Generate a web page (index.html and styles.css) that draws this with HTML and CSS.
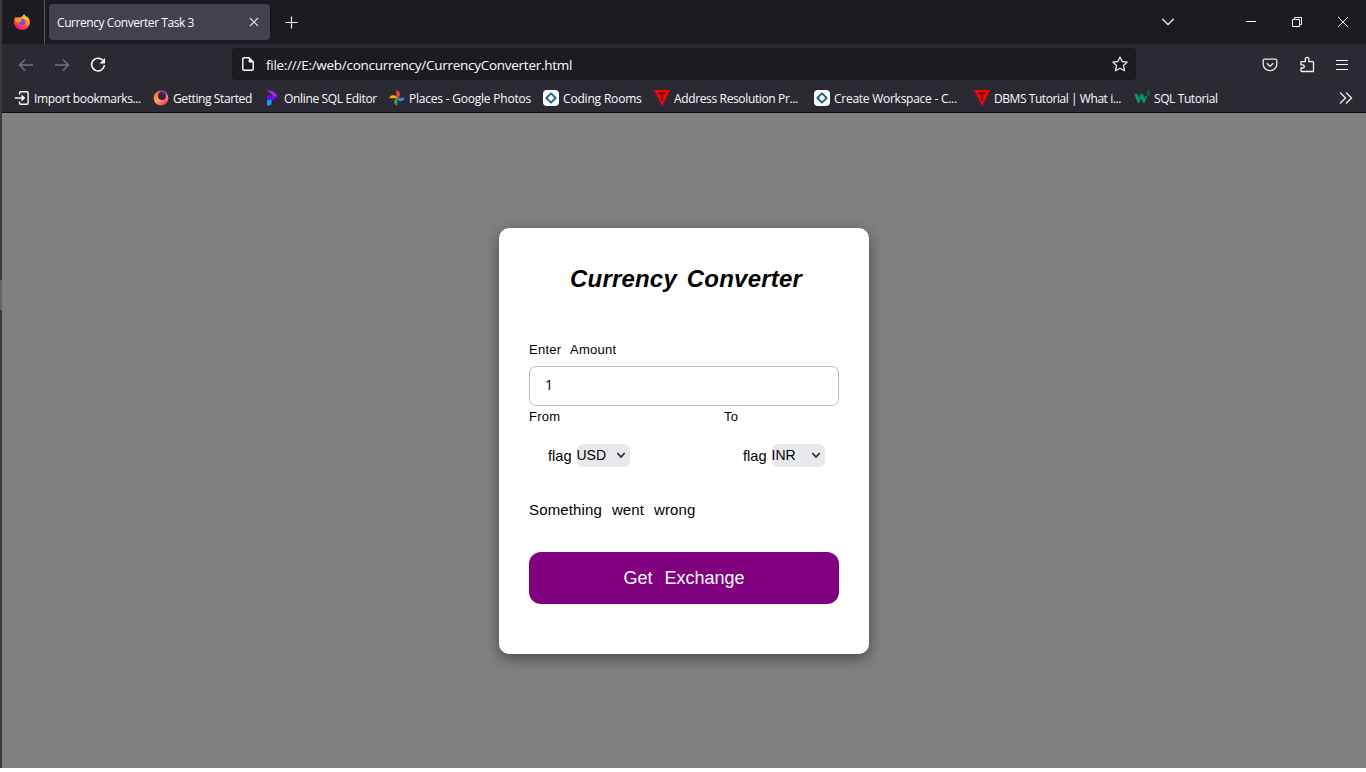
FILE: index.html
```html
<!DOCTYPE html>
<html lang="en">
<head>
<meta charset="utf-8">
<title>Currency Converter Task 3</title>
<link rel="stylesheet" href="styles.css">
</head>
<body>
<svg class="defs" width="0" height="0" aria-hidden="true">
  <defs>
    <linearGradient id="flame" x1="0.8" y1="0" x2="0.3" y2="1"><stop offset="0" stop-color="#fff14a"/><stop offset=".4" stop-color="#ff9526"/><stop offset=".75" stop-color="#ff3750"/><stop offset="1" stop-color="#f0148c"/></linearGradient>
    <linearGradient id="swirl" x1="0.1" y1="0.2" x2="0.6" y2="1"><stop offset="0" stop-color="#ff6a3a"/><stop offset=".5" stop-color="#ffa84a"/><stop offset="1" stop-color="#ff3a68"/></linearGradient>
    <symbol id="rooms" viewBox="0 0 16 16"><rect width="16" height="16" rx="4" fill="#fff"/><path d="M8 3.300 12.700 8 8 12.700 3.300 8Z" fill="none" stroke="#1d5f8c" stroke-width="1.800" stroke-linejoin="round"/></symbol>
    <symbol id="tri" viewBox="0 0 16 16"><path d="M0 0h16L8.200 16Z" fill="#f00"/><path d="M4.700 3.300h6.600M8 3.300v7.600" stroke="#4a1020" stroke-width="1.800"/></symbol>
  </defs>
</svg>
<div class="window">
  <div class="edge"><i></i></div>
  <div class="browser">
    <div class="tabbar">
      <div class="pinned"><svg width="16" height="16" viewBox="0 0 16 16"><path d="M8.200 2.400C9 1.800 9.600 1 10 0c1 1 1.200 2 2.200 3l.6-.8C15 4.300 16 6 15.900 8.500 15.700 12.800 12.300 16 8 16S.2 12.600.1 8.300C0 6 .6 4 1.900 2.500L2.400 4 3.700 2.900 5 3.800Z" fill="url(#flame)"/><path d="M5.400 5.300 8 4.700c2.300 0 3.700 1.500 3.600 3.300-.1 1.900-1.600 3.100-3.400 3.100-1.900 0-3.200-1.300-3.300-2.900l2.400-.7-.3-1Z" fill="#7a48e8"/><path d="M1.500 5.500 5.500 4.600l2.600 1.300-1.700 1.500-1.800.8L2 8Z" fill="#ff9a1f"/></svg></div>
      <div class="tab"><span class="tab-title">Currency Converter Task 3</span><svg width="10" height="10" viewBox="0 0 10 10"><path d="M1 1l8 8M9 1 1 9" stroke="#e2e1e8" stroke-width="1.100"/></svg></div>
      <svg class="newtab" width="13" height="13" viewBox="0 0 13 13"><path d="M6.500.5v12M.5 6.500h12" stroke="#fbfbfe" stroke-width="1.200"/></svg>
      <div class="win-controls">
        <svg width="14" height="10" viewBox="0 0 14 10"><path d="M1.300 2 7 7.600 12.700 2" fill="none" stroke="#e8e8ec" stroke-width="1.400"/></svg>
        <svg width="10" height="10" viewBox="0 0 10 10"><path d="M0 4.500h10" stroke="#fff"/></svg>
        <svg width="10" height="10" viewBox="0 0 10 10"><path d="M.5 2.500h7v7h-7zM2.500 2.500v-2h7v7h-2" fill="none" stroke="#fff"/></svg>
        <svg width="12" height="12" viewBox="0 0 12 12"><path d="M1 1l10 10M11 1 1 11" stroke="#e8e8ec" stroke-width="1"/></svg>
      </div>
    </div>
    <div class="navbar">
      <div class="nav-buttons">
        <svg width="16" height="16" viewBox="0 0 16 16"><path d="M15 8H1.500M7 2.500 1.500 8 7 13.500" fill="none" stroke="#77757e" stroke-width="1.300"/></svg>
        <svg width="16" height="16" viewBox="0 0 16 16"><path d="M1 8h13.500M9 2.500 14.500 8 9 13.500" fill="none" stroke="#77757e" stroke-width="1.300"/></svg>
        <svg width="16" height="16" viewBox="0 0 16 16"><path d="M12.800 3.300A6.400 6.400 0 1 0 14.400 8" fill="none" stroke="#fbfbfe" stroke-width="1.500"/><path d="M15 1v5.400H9.600Z" fill="#fbfbfe"/></svg>
      </div>
      <div class="urlbar">
        <svg width="16" height="16" viewBox="0 0 16 16"><path d="M2.800 2.700q0-1 1-1H9l4.200 4.200v7.400q0 1-1 1H3.800q-1 0-1-1Z" fill="none" stroke="#fbfbfe" stroke-width="1.400"/><path d="M8.600 1.600v4.800h4.800Z" fill="#fbfbfe"/></svg>
        <span class="url">file:///E:/web/concurrency/CurrencyConverter.html</span>
        <svg width="16" height="16" viewBox="0 0 16 16"><path d="M8 1 10.100 5.500 15.200 6.100 11.500 9.500 12.500 14.700 8 12.200 3.500 14.700 4.500 9.500.8 6.100 5.900 5.500Z" fill="none" stroke="#e6e6ea" stroke-width="1.300" stroke-linejoin="round"/></svg>
      </div>
      <div class="nav-tools">
        <svg width="16" height="16" viewBox="0 0 16 16"><path d="M2.500 2.200h11q1.300 0 1.300 1.300v3.800a6.800 6.400 0 0 1-13.600 0V3.500q0-1.300 1.300-1.300Z" fill="none" stroke="#e8e8ec" stroke-width="1.300"/><path d="M4.800 6.300 8 9.300 11.200 6.300" fill="none" stroke="#e8e8ec" stroke-width="1.400"/></svg>
        <svg width="16" height="17" viewBox="0 0 16 17"><path d="M2 5.700h4.300V3.200a1.800 1.800 0 0 1 3.600 0v2.500h3.800q.8 0 .8.800v9H2.900q-.9 0-.9-.9v-2.600h1.700a1.600 1.600 0 0 0 0-3.200H2Z" fill="none" stroke="#f4f4f8" stroke-width="1.300" stroke-linejoin="round"/></svg>
        <svg width="14" height="12" viewBox="0 0 14 12"><path d="M1 1.500h12M1 5.500h12M1 10.500h12" stroke="#f4f4f8" stroke-width="1.200"/></svg>
      </div>
    </div>
    <div class="bookmarks">
      <div class="bm b1"><svg width="16" height="16" viewBox="0 0 16 16"><path d="M5.500 4.500V3q0-1.300 1.300-1.300h6q1.300 0 1.300 1.300v10q0 1.300-1.300 1.300h-6q-1.300 0-1.300-1.300v-1.500" fill="none" stroke="#fbfbfe" stroke-width="1.400"/><path d="M.8 8H9" stroke="#fbfbfe" stroke-width="1.400"/><path d="M7.500 4.600 11.300 8 7.500 11.400Z" fill="#fbfbfe"/></svg><span>Import bookmarks...</span></div>
      <div class="bm b2"><svg width="16" height="16" viewBox="0 0 16 16"><circle cx="8" cy="8" r="7.400" fill="url(#swirl)"/><path d="M7 .8a7.400 7.400 0 0 1 8.400 7.600C15 5.500 12 2 7 .8Z" fill="#7440c8"/><circle cx="9" cy="5.900" r="4" fill="#30244a"/><path d="M6 .9Q12 1 12.900 6l-3-2.500Z" fill="#4d318c"/></svg><span>Getting Started</span></div>
      <div class="bm b3"><svg width="16" height="16" viewBox="0 0 16 16"><path d="M2.500 0 8.500 1 12.800 4.500 13 7 8.500 8 8.500 5.200 6.500 3.300Z" fill="#a02af8"/><path d="M12.900 5.500 11.500 8.500 8 10.500 3 11.500V8.500L8.500 6.500Z" fill="#6a11f2"/><path d="M3 6 7 5 6.500 8 3 9.500Z" fill="#6a11f2"/><path d="M3 10.500 7.500 9.800V14.500L3 16Z" fill="#0aa0ff"/></svg><span>Online SQL Editor</span></div>
      <div class="bm b4"><svg width="16" height="16" viewBox="0 0 16 16"><path d="M7.700.5a4 4 0 0 1 0 7.700Z" fill="#ea4335" stroke="#ea4335" stroke-width=".7"/><path d="M15.400 8.200A3.900 3.900 0 0 1 8 8.200Z" fill="#4285f4" stroke="#4285f4" stroke-width=".7"/><path d="M8 15.500A3.900 3.900 0 0 1 8 8.300Z" fill="#34a853" stroke="#34a853" stroke-width=".7"/><path d="M.6 7.800A3.900 3.900 0 0 1 7.700 7.800Z" fill="#fbbc04" stroke="#fbbc04" stroke-width=".7"/></svg><span>Places - Google Photos</span></div>
      <div class="bm b5"><svg width="16" height="16"><use href="#rooms"/></svg><span>Coding Rooms</span></div>
      <div class="bm b6"><svg width="16" height="16"><use href="#tri"/></svg><span>Address Resolution Pr...</span></div>
      <div class="bm b7"><svg width="16" height="16"><use href="#rooms"/></svg><span>Create Workspace - C...</span></div>
      <div class="bm b8"><svg width="16" height="16"><use href="#tri"/></svg><span>DBMS Tutorial | What i...</span></div>
      <div class="bm b9"><svg width="16" height="16" viewBox="0 0 16 16"><path d="M.3 4H3.500L5.300 8.500 6.500 4H9L10.300 8.500 11.500 6H13.300L10.500 13H9.300L7.200 8.500 5 13H3.800Z" fill="#059862"/><path d="M13 1.800h2.300l-1.200 1.400q1.400.1 1.200 1.200-.5 1-2.300.4" fill="none" stroke="#059862" stroke-width=".8"/></svg><span>SQL Tutorial</span></div>
      <svg class="more" width="14" height="14" viewBox="0 0 14 14"><path d="M1 1.500 6.500 7 1 12.500M7 1.500 12.500 7 7 12.500" fill="none" stroke="#e8e8ec" stroke-width="1.400"/></svg>
    </div>
    <main class="page">
      <div class="card">
        <h1>Currency Converter</h1>
        <div class="label amount-label">Enter Amount</div>
        <div class="amount">1</div>
        <div class="pair labels"><div class="label">From</div><div class="label">To</div></div>
        <div class="pair picks">
          <div class="pick"><span>flag</span><div class="select"><span>USD</span><svg width="10" height="7" viewBox="0 0 10 7"><path d="M1.300 1 5 5 8.700 1" fill="none" stroke="#2b2a33" stroke-width="1.800"/></svg></div></div>
          <div class="pick"><span>flag</span><div class="select"><span>INR</span><svg width="10" height="7" viewBox="0 0 10 7"><path d="M1.300 1 5 5 8.700 1" fill="none" stroke="#2b2a33" stroke-width="1.800"/></svg></div></div>
        </div>
        <p class="msg">Something went wrong</p>
        <button class="go">Get Exchange</button>
      </div>
    </main>
  </div>
</div>
</body>
</html>
```

FILE: styles.css
```css
* { box-sizing: border-box; }
body { margin: 0; background: #fff; font-family: "Liberation Sans", Arial, sans-serif; overflow: hidden; }
.defs { position: absolute; }
svg { display: block; flex: none; }
.window { display: flex; width: 1366px; height: 768px; }
.edge { width: 2px; background: #3a3a3a; padding-top: 280px; }
.edge i { display: block; height: 30px; background: #666; }
.browser { flex: 1; display: flex; flex-direction: column; }
.tabbar, .navbar, .bookmarks { font-family: "Open Sans", "Noto Sans", sans-serif; color: #fbfbfe; white-space: nowrap; }

.tabbar { display: flex; align-items: center; height: 44px; background: #1c1b22; }
.pinned { width: 43px; height: 44px; padding: 14px 0 0 12px; border-right: 1px solid #5a5960; }
.tab { display: flex; align-items: center; justify-content: space-between; width: 221px; height: 36px; margin-left: 4px; padding: 0 11px 0 8px; border-radius: 4px; background: #42414d; box-shadow: 0 0 3px rgba(0,0,0,.5); font-size: 12px; }
.tab-title { padding-top: 1px; letter-spacing: -.43px; }
.newtab { margin-left: 15px; }
.win-controls { display: flex; align-items: center; margin-left: auto; padding-right: 17px; }
.win-controls svg:nth-child(1) { margin-right: 71px; }
.win-controls svg:nth-child(2) { margin-right: 36px; }
.win-controls svg:nth-child(3) { margin-right: 35px; }

.navbar { display: flex; align-items: center; height: 40px; padding-top: 1px; background: #2b2a33; }
.nav-buttons { display: flex; gap: 20px; width: 230px; padding-left: 16px; }
.urlbar { display: flex; align-items: center; width: 904px; height: 32px; margin-top: -1px; padding: 0 8px; border-radius: 4px; background: #1c1b22; font-size: 13.500px; }
.url { flex: 1; margin-left: 10px; padding-top: 1px; letter-spacing: -.27px; }
.nav-tools { display: flex; align-items: center; margin-left: auto; padding-right: 17px; gap: 20.500px; }

.bookmarks { display: flex; align-items: center; height: 29px; padding-left: 12px; background: #2b2a33; border-bottom: 1px solid #0c0c0d; font-size: 12px; letter-spacing: -.4px; }
.bm { display: flex; align-items: center; gap: 4px; }
.bm span { padding-top: 1px; }
.b1 { width: 139px; letter-spacing: -.35px; }
.b2 { width: 111px; }
.b3 { width: 125px; letter-spacing: -.34px; }
.b4 { width: 154px; letter-spacing: -.22px; }
.b5 { width: 111px; letter-spacing: -.18px; }
.b6, .b7, .b8 { width: 160px; }
.b6 { letter-spacing: -.36px; }
.b7 { letter-spacing: -.26px; }
.b8 { letter-spacing: -.44px; }
.more { margin-left: auto; margin-right: 13px; }

.page { flex: 1; padding: 115px 0 0 497px; background: #808080; }
.card { width: 370px; height: 426px; padding: 35px 30px 0; border-radius: 10px; background: #fff; box-shadow: 0 4px 14px rgba(0,0,0,.45); color: #000; }
h1 { margin: 0; padding: 1px 0 0 4px; text-align: center; font-size: 24px; line-height: 29px; font-style: italic; letter-spacing: .2px; word-spacing: 3px; }
.label { font-size: 13px; line-height: 16px; letter-spacing: .25px; word-spacing: 5.500px; }
.amount-label { margin-top: 49px; }
.amount { height: 40px; margin-top: 8px; padding-left: 15px; border: 1px solid #bbb; border-radius: 7px; font-family: "Open Sans", sans-serif; font-size: 14px; line-height: 36px; }
.pair { display: grid; grid-template-columns: 195px 115px; }
.labels { margin-top: 3px; }
.picks { margin-top: 19px; }
.pick { display: flex; align-items: center; padding-left: 19px; font-size: 14.600px; }
.pick > span { width: 29px; }
.select { display: flex; align-items: center; justify-content: space-between; width: 53px; height: 23px; padding-right: 4px; border-radius: 6px; background: #e9e9ed; font-size: 14px; }
.select span { margin: -1px 0 0 -.5px; }
.msg { margin: 34px 0 0; font-size: 15px; line-height: 18px; letter-spacing: .15px; word-spacing: 5.500px; }
.go { display: block; width: 310px; height: 52px; margin-top: 33px; padding: 0; border: 0; border-radius: 12px; background: #800080; color: #fff; font: 18px "Liberation Sans", Arial, sans-serif; word-spacing: 7px; }
```
